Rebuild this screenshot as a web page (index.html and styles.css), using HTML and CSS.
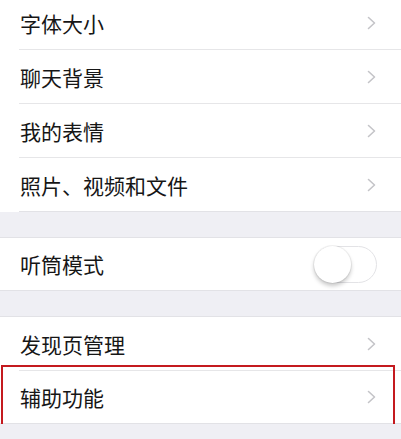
FILE: index.html
```html
<!DOCTYPE html>
<html lang="zh-CN">
<head>
    <meta charset="UTF-8">
    <meta name="viewport" content="width=device-width, initial-scale=1.0">
    <title>通用</title>
    <link rel="stylesheet" href="styles.css">
</head>
<body>
    <div class="group first">
        <div class="row"><div class="row-inner"><span class="label">字体大小</span><svg class="chevron" viewBox="0 0 9 14"><path d="M1.5 1.5 L7.5 7 L1.5 12.5"/></svg></div></div>
        <div class="row"><div class="row-inner"><span class="label">聊天背景</span><svg class="chevron" viewBox="0 0 9 14"><path d="M1.5 1.5 L7.5 7 L1.5 12.5"/></svg></div></div>
        <div class="row"><div class="row-inner"><span class="label">我的表情</span><svg class="chevron" viewBox="0 0 9 14"><path d="M1.5 1.5 L7.5 7 L1.5 12.5"/></svg></div></div>
        <div class="row"><div class="row-inner"><span class="label">照片、视频和文件</span><svg class="chevron" viewBox="0 0 9 14"><path d="M1.5 1.5 L7.5 7 L1.5 12.5"/></svg></div></div>
    </div>

    <div class="group">
        <div class="row"><div class="row-inner"><span class="label">听筒模式</span><span class="switch"><span class="knob"></span></span></div></div>
    </div>

    <div class="group">
        <div class="row"><div class="row-inner"><span class="label">发现页管理</span><svg class="chevron" viewBox="0 0 9 14"><path d="M1.5 1.5 L7.5 7 L1.5 12.5"/></svg></div></div>
        <div class="row marked">
            <div class="row-inner"><span class="label">辅助功能</span><svg class="chevron" viewBox="0 0 9 14"><path d="M1.5 1.5 L7.5 7 L1.5 12.5"/></svg></div>
            <div class="highlight"></div>
        </div>
    </div>
</body>
</html>
```

FILE: styles.css
```css
body {
    margin: 0;
    background: #efeff4;
    font-family: "Noto Sans CJK SC", "Noto Sans", sans-serif;
    color: #161616;
    overflow: hidden;
}
.group {
    background: #fff;
    border-top: 1px solid #e2e2e6;
    border-bottom: 1px solid #e2e2e6;
    margin-top: 25px;
}
.group.first {
    margin-top: -4px;
    border-top: none;
    border-bottom: none;
}
.row {
    position: relative;
    padding-left: 19px;
}
.row-inner {
    display: flex;
    align-items: center;
    justify-content: space-between;
    height: 53px;
    padding-right: 24px;
    border-bottom: 1px solid #e6e6e8;
}
.row:last-child .row-inner {
    border-bottom: none;
    height: 52px;
}
.group.first .row:last-child .row-inner {
    height: 53px;
    border-bottom: 1px solid #e2e2e6;
}
.label {
    font-size: 21px;
    padding-left: 1px;
}
.chevron {
    width: 9px;
    height: 14px;
    fill: none;
    stroke: #c4c4c8;
    stroke-width: 1.6;
    stroke-linecap: round;
    stroke-linejoin: round;
    margin-right: 1px;
}
.switch {
    position: relative;
    width: 61px;
    height: 35px;
    border: 1px solid #e3e3e6;
    border-radius: 19px;
    background: #fff;
}
.knob {
    position: absolute;
    left: -1px;
    top: -1px;
    width: 37px;
    height: 37px;
    border-radius: 50%;
    background: #fff;
    box-shadow: 0 3px 4px rgba(0, 0, 0, 0.22), 0 0 0 1px rgba(0, 0, 0, 0.05);
}
.highlight {
    position: absolute;
    top: -6px;
    bottom: -3px;
    left: 1px;
    right: 6px;
    border: 2px solid #c41a1f;
}
```
